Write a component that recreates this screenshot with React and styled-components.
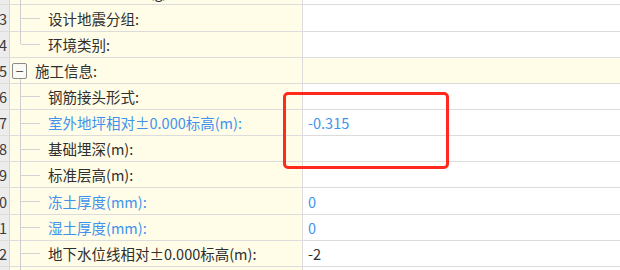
import React from 'react'
import styled, { createGlobalStyle } from 'styled-components'

const GlobalStyle = createGlobalStyle`
  html, body {
    margin: 0;
    padding: 0;
    background: #ffffff;
  }
  body {
    font-family: "Noto Sans CJK SC", "Liberation Sans", sans-serif;
  }
`

const rows = [
  { no: 12, label: '基本地震加速度(g):', kind: 'child' },
  { no: 13, label: '设计地震分组:', kind: 'child' },
  { no: 14, label: '环境类别:', kind: 'last' },
  { no: 15, label: '施工信息:', kind: 'group' },
  { no: 16, label: '钢筋接头形式:', kind: 'child' },
  { no: 17, label: '室外地坪相对±0.000标高(m):', kind: 'child', blue: true, value: '-0.315', valueBlue: true },
  { no: 18, label: '基础埋深(m):', kind: 'child' },
  { no: 19, label: '标准层高(m):', kind: 'child' },
  { no: 20, label: '冻土厚度(mm):', kind: 'child', blue: true, value: '0', valueBlue: true },
  { no: 21, label: '湿土厚度(mm):', kind: 'child', blue: true, value: '0', valueBlue: true },
  { no: 22, label: '地下水位线相对±0.000标高(m):', kind: 'child', value: '-2' },
  { no: 23, label: '', kind: 'child' },
]

function App() {
  return (
    <Page>
      <GlobalStyle />
      <Viewport>
        <Sheet>
          {rows.map((r) => (
            <Row key={r.no}>
              <RowNo>
                <span>{r.no}</span>
              </RowNo>
              <LabelCell>
                {r.kind === 'group' ? (
                  <GroupGutter>
                    <Toggle>−</Toggle>
                  </GroupGutter>
                ) : (
                  <TreeGutter $last={r.kind === 'last'} />
                )}
                <Label $blue={r.blue}>{r.label}</Label>
              </LabelCell>
              <ValueCell $group={r.kind === 'group'} $blue={r.valueBlue}>
                {r.value}
              </ValueCell>
            </Row>
          ))}
        </Sheet>
      </Viewport>
      <Highlight />
    </Page>
  )
}

const Page = styled.div`
  position: relative;
  width: 620px;
  height: 270px;
  overflow: hidden;
  background: #ffffff;
`

const Viewport = styled.div`
  height: 100%;
  overflow: hidden;
`

const Sheet = styled.div`
  display: flex;
  flex-direction: column;
  margin-top: -20.7px;
`

const Row = styled.div`
  display: grid;
  grid-template-columns: 10px 293px 1fr;
  height: 26.15px;
  box-sizing: border-box;
  border-bottom: 1px solid #dcdcdc;
  font-size: 14.5px;
  color: #2f2f2f;
`

const RowNo = styled.div`
  display: flex;
  justify-content: flex-end;
  align-items: center;
  overflow: hidden;
  background: #ececec;
  border-right: 1px solid #d6d6d6;
  padding-right: 2px;
  color: #3a3a3a;
  white-space: nowrap;
`

const LabelCell = styled.div`
  display: flex;
  align-items: stretch;
  background: #fffde8;
  border-right: 1px solid #dcdcdc;
  min-width: 0;
`

const TreeGutter = styled.div`
  position: relative;
  flex: 0 0 38px;
  &::before {
    content: '';
    position: absolute;
    left: 10px;
    top: 0;
    width: 1px;
    height: ${(p) => (p.$last ? '50%' : 'calc(100% + 1px)')};
    background: #cfcfcf;
  }
  &::after {
    content: '';
    position: absolute;
    left: 11px;
    top: 50%;
    width: 19px;
    height: 1px;
    background: #d4d4d4;
  }
`

const GroupGutter = styled.div`
  position: relative;
  flex: 0 0 25px;
  display: flex;
  align-items: center;
  &::after {
    content: '';
    position: absolute;
    left: 10px;
    top: 21px;
    width: 1px;
    bottom: -1px;
    background: #cfcfcf;
  }
`

const Toggle = styled.div`
  width: 13px;
  height: 14px;
  margin-left: 2px;
  margin-top: 2px;
  border: 1px solid #8a8a8a;
  border-radius: 2px;
  background: #fbfbf6;
  display: flex;
  align-items: center;
  justify-content: center;
  font-size: 11px;
  line-height: 1;
  color: #555555;
  font-family: "DejaVu Sans", sans-serif;
`

const Label = styled.div`
  display: flex;
  align-items: center;
  white-space: nowrap;
  color: ${(p) => (p.$blue ? '#3f92ec' : '#2f2f2f')};
`

const ValueCell = styled.div`
  display: flex;
  align-items: center;
  padding-left: 5px;
  background: ${(p) => (p.$group ? '#fffde8' : '#ffffff')};
  color: ${(p) => (p.$blue ? '#3f92ec' : '#2f2f2f')};
  white-space: nowrap;
`

const Highlight = styled.div`
  position: absolute;
  left: 283px;
  top: 92px;
  width: 166px;
  height: 77px;
  box-sizing: border-box;
  border: 3px solid #ff2a1d;
  border-radius: 5px;
  pointer-events: none;
`

export default App
